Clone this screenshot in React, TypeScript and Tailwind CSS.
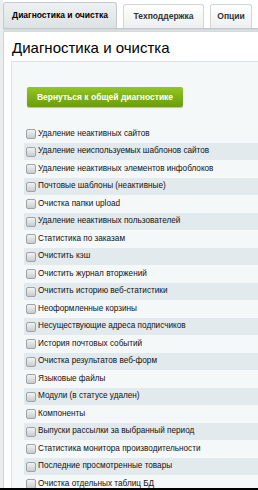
const items = [
  'Удаление неактивных сайтов',
  'Удаление неиспользуемых шаблонов сайтов',
  'Удаление неактивных элементов инфоблоков',
  'Почтовые шаблоны (неактивные)',
  'Очистка папки upload',
  'Удаление неактивных пользователей',
  'Статистика по заказам',
  'Очистить кэш',
  'Очистить журнал вторжений',
  'Очистить историю веб-статистики',
  'Неоформленные корзины',
  'Несуществующие адреса подписчиков',
  'История почтовых событий',
  'Очистка результатов веб-форм',
  'Языковые файлы',
  'Модули (в статусе удален)',
  'Компоненты',
  'Выпуски рассылки за выбранный период',
  'Статистика монитора производительности',
  'Последние просмотренные товары',
  'Очистка отдельных таблиц БД',
];

export default function App() {
  return (
    <div className="w-[258px] h-[490px] overflow-hidden bg-white flex flex-col font-['Liberation_Sans',Arial,sans-serif] text-black">
      <div className="flex-1 overflow-hidden pl-[3px] bg-[#e9edee]">
        <div className="flex items-end h-[28px] gap-[6px] bg-white">
          <div className="h-[26px] w-[114px] flex items-center justify-center rounded-t-[3px] border border-b-0 border-[#c3cbce] bg-gradient-to-b from-[#eef1f2] to-[#dce2e4] text-[8.5px] font-bold">
            Диагностика и очистка
          </div>
          <div className="h-[24px] w-[81px] flex items-center justify-center rounded-t-[3px] border border-b-0 border-[#cfd5d8] bg-gradient-to-b from-white to-[#eceff0] text-[8.5px] font-bold text-[#333]">
            Техподдержка
          </div>
          <div className="h-[24px] w-[42px] flex items-center justify-center rounded-t-[3px] border border-b-0 border-[#cfd5d8] bg-gradient-to-b from-white to-[#eceff0] text-[8.5px] font-bold text-[#333]">
            Опции
          </div>
          <div className="flex-1 h-full bg-white" />
        </div>
        <div className="h-[4px] bg-gradient-to-b from-[#bcc4c7] to-[#e4e8e9] border-b border-[#d3d9db]" />
        <div className="border-l border-[#cdd4d7] bg-white h-full">
          <div className="h-[29px] pl-[8px] pt-[7px] text-[15px] leading-[18px]">Диагностика и очистка</div>
          <div className="ml-[7px] border-t border-l border-[#dbe2e5] bg-[#f5f8f9] h-full pt-[21px]">
            <button className="ml-[15px] h-[20px] w-[156px] rounded-[2px] bg-gradient-to-b from-[#93c623] to-[#6b9c0b] text-white text-[8.5px] font-bold shadow-[0_1px_1px_rgba(0,0,0,0.25)]">
              Вернуться к общей диагностике
            </button>
            <div className="mt-[18px] ml-[12px]">
              {items.map((item, i) => (
                <div
                  key={item}
                  className={`h-[17.5px] flex items-center pl-[2px] gap-[2px] ${i % 2 === 1 ? 'bg-[#e3eaed]' : ''}`}
                >
                  <span className="w-[10px] h-[10px] rounded-[2px] border border-[#9da3a6] bg-gradient-to-b from-[#f2f2f2] to-[#c9cccd] shrink-0" />
                  <span className="text-[8.2px] whitespace-nowrap text-[#111]">{item}</span>
                </div>
              ))}
            </div>
          </div>
        </div>
      </div>
      <div className="h-[2px] bg-black shrink-0" />
    </div>
  );
}
